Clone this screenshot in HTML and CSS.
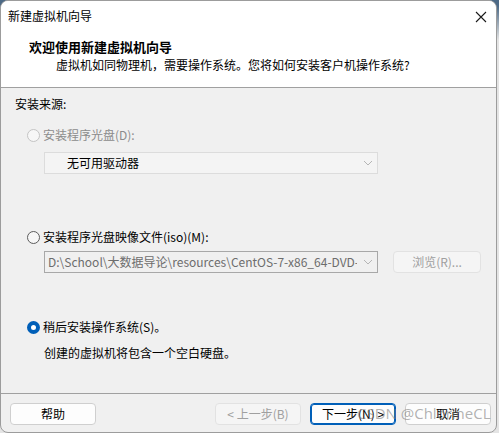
FILE: index.html
```html
<!DOCTYPE html>
<html lang="zh-CN">
<head>
    <meta charset="UTF-8">
    <meta name="viewport" content="width=device-width, initial-scale=1.0">
    <title>新建虚拟机向导</title>
    <link rel="stylesheet" href="styles.css">
</head>
<body>
    <div class="window">
        <div class="titlebar">
            <span>新建虚拟机向导</span>
            <svg class="close" width="12" height="12" viewBox="0 0 12 12">
                <path d="M1 1 L11 11 M11 1 L1 11" stroke="#1a1a1a" stroke-width="1.1" fill="none"/>
            </svg>
        </div>

        <div class="header">
            <div class="header-title">欢迎使用新建虚拟机向导</div>
            <div class="header-sub">虚拟机如同物理机，需要操作系统。您将如何安装客户机操作系统?</div>
        </div>

        <div class="content">
            <div class="group-label">安装来源:</div>

            <div class="option disabled first">
                <span class="radio"></span>安装程序光盘(D):
            </div>
            <div class="select disabled">
                <span class="select-text">无可用驱动器</span>
                <svg class="chevron" width="10" height="6" viewBox="0 0 10 6"><path d="M1 1 L5 5 L9 1" stroke="#b5b5b5" fill="none"/></svg>
            </div>

            <div class="option second">
                <span class="radio"></span>安装程序光盘映像文件(iso)(M):
            </div>
            <div class="row">
                <div class="select path">
                    <span class="path-text">D:\School\大数据导论\resources\CentOS-7-x86_64-DVD-2009.iso</span>
                    <svg class="chevron" width="10" height="6" viewBox="0 0 10 6"><path d="M1 1 L5 5 L9 1" stroke="#b5b5b5" fill="none"/></svg>
                </div>
                <div class="btn browse disabled">浏览(R)...</div>
            </div>

            <div class="option third">
                <span class="radio checked"></span>稍后安装操作系统(S)。
            </div>
            <div class="note">创建的虚拟机将包含一个空白硬盘。</div>
        </div>

        <div class="footer">
            <div class="btn">帮助</div>
            <div class="spacer"></div>
            <div class="btn disabled">&lt; 上一步(B)</div>
            <div class="btn default">下一步(N) &gt;</div>
            <div class="btn">取消</div>
            <div class="watermark">CSDN @ChlorineCL</div>
        </div>
    </div>
</body>
</html>
```

FILE: styles.css
```css
body {
    margin: 0;
    background: linear-gradient(#4d6a86 0px, #4d6a86 6px, #e4e4e4 40px);
    font-family: "Noto Sans CJK SC", "Microsoft YaHei", sans-serif;
    font-size: 12px;
    color: #000;
}
.window {
    width: 495px;
    height: 431px;
    border: 1px solid #9c9c9c;
    border-radius: 8px;
    overflow: hidden;
    background-color: #f0f0f0;
    display: flex;
    flex-direction: column;
}
.titlebar {
    height: 30px;
    background-color: #fff;
    display: flex;
    align-items: center;
    justify-content: space-between;
    padding: 0 9px 0 7px;
    line-height: 18px;
}
.close {
    margin-top: 1px;
}
.header {
    background-color: #fff;
    padding: 7px 0 13px 28px;
    border-bottom: 1px solid #a0a0a0;
    line-height: 18px;
}
.header-title {
    font-weight: bold;
    font-size: 13px;
}
.header-sub {
    padding-left: 27px;
}
.content {
    flex: 1;
    padding: 7px 0 0 14px;
    line-height: 18px;
}
.option {
    display: flex;
    align-items: center;
    margin-left: 12px;
}
.option.first {
    margin-top: 13px;
}
.option.second {
    margin-top: 54px;
}
.option.third {
    margin-top: 45px;
}
.option.disabled {
    color: #8c8c8c;
}
.radio {
    width: 11px;
    height: 11px;
    border: 1px solid #5c5c5c;
    border-radius: 50%;
    margin-right: 3px;
    background-color: #f7f7f7;
}
.option.disabled .radio {
    border-color: #c4c4c4;
}
.radio.checked {
    width: 5px;
    height: 5px;
    border: 4px solid #005fb8;
    background-color: #fff;
}
.select {
    margin: 8px 0 0 29px;
    width: 328px;
    height: 20px;
    border: 1px solid #dcdcdc;
    background-color: #f4f4f4;
    display: flex;
    align-items: center;
    justify-content: space-between;
    padding-right: 4px;
    box-sizing: content-box;
}
.select-text {
    padding-left: 22px;
}
.chevron {
    flex-shrink: 0;
}
.row {
    display: flex;
    align-items: center;
    margin-top: 5px;
}
.select.path {
    margin: 0 0 0 29px;
    border-color: #a8a8a8;
    background-color: #f0f0f0;
}
.path-text {
    color: #6d6d6d;
    padding-left: 3px;
    white-space: nowrap;
    overflow: hidden;
    width: 309px;
}
.btn {
    width: 84px;
    height: 20px;
    border: 1px solid #cfcfcf;
    border-radius: 4px;
    background-color: #fdfdfd;
    display: flex;
    align-items: center;
    justify-content: center;
    line-height: 18px;
}
.btn.disabled {
    color: #a0a0a0;
    background-color: #f5f5f5;
    border-color: #e2e2e2;
}
.btn.browse {
    margin-left: 15px;
    width: 86px;
}
.btn.default {
    border: 1px solid #005fb8;
    box-shadow: inset 0 0 0 1px #005fb8;
}
.note {
    margin: 8px 0 0 29px;
}
.footer {
    position: relative;
    height: 39px;
    border-top: 1px solid #a0a0a0;
    display: flex;
    align-items: flex-start;
    padding: 9px 0 0 9px;
    box-sizing: border-box;
    gap: 9px;
}
.spacer {
    width: 101px;
}
.watermark {
    position: absolute;
    z-index: 1;
    left: 356px;
    top: 9px;
    white-space: nowrap;
    font-family: "Open Sans", sans-serif;
    font-size: 15px;
    line-height: 20px;
    color: rgba(125, 125, 125, 0.6);
}
```
